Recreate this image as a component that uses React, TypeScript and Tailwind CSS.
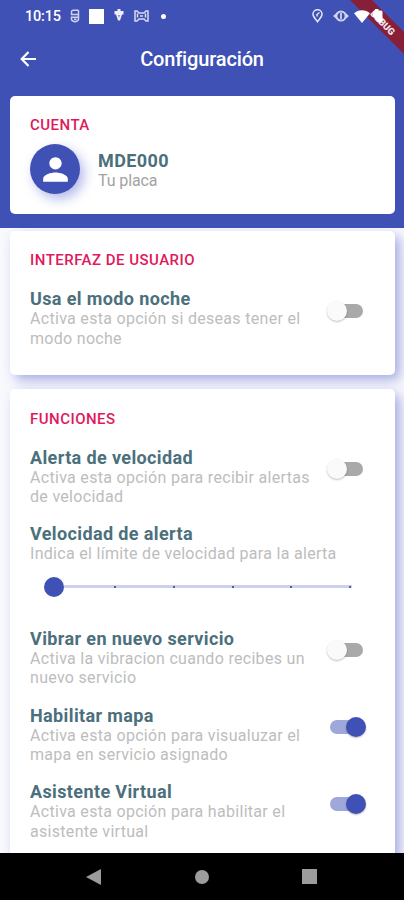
import React, { useState } from "react";
import { MdPerson } from "react-icons/md";

function StatusBar() {
  return (
    <div className="h-8 flex items-center justify-between pl-[25px] pr-[21px] text-white">
      <div className="flex items-center">
        <span className="w-[45px] pt-px text-[14.5px] leading-[31px] font-medium tracking-[-0.2px]">10:15</span>
        <svg className="opacity-75" width="10" height="14" viewBox="0 0 10 14" fill="none" stroke="currentColor" strokeWidth="1.5">
          <path d="M8.5 1.2H3Q1.5 1.2 1.5 3V5.5H8.5M8.5 1.2V10.2Q8.5 12 5 12.7Q1.5 12 1.5 10.2V8.2H8.5M4 10.3h2.5" />
        </svg>
        <span className="ml-[9px] w-[15px] h-[15px] bg-white" />
        <svg className="ml-[10px] -mt-[2px]" width="10" height="13" viewBox="0 0 10 13" fill="currentColor">
          <path d="M3.5 0h3v2H9.5v3.5H8L6 11.5H4L2 5.5H.5V2h3z" opacity=".9" />
          <path d="M3.8 6h2.4L5 9z" fill="#8c97d8" />
        </svg>
        <svg className="ml-[10px] opacity-80" width="15" height="12" viewBox="0 0 15 12" fill="none" stroke="currentColor" strokeWidth="1.5">
          <path d="M1 11V1h2l2 2h5l2-2h2v10h-2l-2-2H5l-2 2z" />
          <path d="M3.5 3.5v4M11.5 3.5v4M6 6h3" />
        </svg>
        <span className="ml-[12px] w-[5px] h-[5px] rounded-full bg-white" />
      </div>
      <div className="relative z-20 flex items-center">
        <svg width="11" height="14" viewBox="0 0 11 14" fill="none" stroke="currentColor" strokeWidth="1.5" opacity=".85">
          <path d="M5.5 12.7C3.3 9.8 1 7.8 1 5.2a4.5 4.5 0 0 1 9 0C10 7.8 7.7 9.8 5.5 12.7z" />
          <path d="M7.5 3.5L5 5.5v2" />
        </svg>
        <svg className="ml-[10px] opacity-75" width="16" height="12" viewBox="0 0 16 12" fill="currentColor">
          <path d="M0 6l4-3.5v7zM16 6l-4-3.5v7z" />
          <path d="M8 1.4a4.6 4.6 0 1 0 0 9.2 4.6 4.6 0 0 0 0-9.2z" fill="none" stroke="currentColor" strokeWidth="2" />
          <path d="M7.1 3h1.8v6H7.1z" />
        </svg>
        <svg className="ml-[5px]" width="16" height="13" viewBox="0 0 16 13" fill="currentColor">
          <path d="M0 3.2C4.5-.8 11.5-.8 16 3.2L8 13z" />
        </svg>
        <svg width="13" height="15" viewBox="0 0 13 15" fill="currentColor">
          <path d="M3.5 2.5L5 1.5V0h3.5v1.5H11q1.5 0 1.5 1.5v8q0 3-2.5 3L8 13 4.5 9 2.5 8z" />
        </svg>
      </div>
    </div>
  );
}

function DebugBanner() {
  return (
    <svg className="absolute top-0 right-0 z-10" width="60" height="60" viewBox="0 0 60 60">
      <path d="M6 0H28L60 32V54z" fill="#871f39" />
      <text
        x="38.5"
        y="26"
        transform="rotate(45 38.5 23)"
        textAnchor="middle"
        fontFamily="Roboto, sans-serif"
        fontWeight="900"
        fontSize="9.5"
        fill="#f3e6ea"
      >
        DEBUG
      </text>
    </svg>
  );
}

function Switch({ checked, onChange }: { checked: boolean; onChange: () => void }) {
  return (
    <button
      role="switch"
      aria-checked={checked}
      onClick={onChange}
      className="mt-[12.5px] w-10 h-5 shrink-0 flex items-center justify-center cursor-pointer"
    >
      <span className={`w-[33px] h-[14px] rounded-full flex items-center ${checked ? "bg-[#9fa8da] justify-end" : "bg-[#a9a9a9] justify-start"}`}>
        <span
          className={`w-5 h-5 shrink-0 rounded-full shadow-[0_1px_2px_rgba(0,0,0,0.25)] ${checked ? "bg-[#3f51b5] -mr-[3px]" : "bg-[#fafafa] -ml-[3px]"}`}
        />
      </span>
    </button>
  );
}

function Card({ title, className, children }: { title: string; className: string; children: React.ReactNode }) {
  return (
    <section className={`ml-[10px] mr-[9px] px-5 bg-white rounded-[5px] ${className}`}>
      <h2 className="text-[15px] leading-[18px] font-medium tracking-[0.48px] text-[#e0195c]">{title}</h2>
      {children}
    </section>
  );
}

function OptionText({ title, text }: { title: string; text: string }) {
  return (
    <div className="flex-1 pr-2">
      <h3 className="text-[18px] leading-[21px] font-bold tracking-[0.38px] text-[#4b707c]">{title}</h3>
      <p className="text-[16px] leading-[19.5px] tracking-[0.3px] text-[#bdbdbd]">{text}</p>
    </div>
  );
}

function Option({ title, text, initial = false }: { title: string; text: string; initial?: boolean }) {
  const [checked, setChecked] = useState(initial);

  return (
    <div className="flex items-start mb-[16.75px] pr-[9px]">
      <OptionText title={title} text={text} />
      <Switch checked={checked} onChange={() => setChecked(!checked)} />
    </div>
  );
}

export function App() {
  return (
    <div className="relative w-[404px] h-[900px] overflow-hidden flex flex-col bg-[#f8f9fd] font-['Roboto',sans-serif]">
      <DebugBanner />
      <header className="h-[228px] shrink-0 bg-[#3f51b5]">
        <StatusBar />
        <div className="h-[54px] grid grid-cols-[56px_1fr_56px] items-center text-white">
          <svg className="ml-5" width="17" height="16" viewBox="0 0 17 16" fill="none" stroke="currentColor" strokeWidth="2.2">
            <path d="M16 8H2M8.5 1L1.7 8l6.8 7" />
          </svg>
          <h1 className="text-center text-[20px] font-medium tracking-[-0.15px]">Configuración</h1>
        </div>
        <Card title="CUENTA" className="mt-[10px] pt-5 h-[118px]">
          <div className="flex items-center mt-[10px]">
            <div className="w-[50px] h-[50px] rounded-full bg-[#3f51b5] text-white flex items-center justify-center shadow-[4px_5px_12px_rgba(63,81,200,0.4)]">
              <MdPerson size={37} />
            </div>
            <div className="ml-[18px] pt-px">
              <h3 className="text-[18px] leading-[21px] font-bold tracking-[0.4px] text-[#4b707c]">MDE000</h3>
              <p className="text-[16px] leading-[19px] tracking-[-0.1px] text-[#a3a3a3]">Tu placa</p>
            </div>
          </div>
        </Card>
      </header>

      <main className="flex-1 min-h-0 overflow-hidden pt-[3px]">
        <Card title="INTERFAZ DE USUARIO" className="pt-5 h-[144px] shadow-[5px_5px_12px_rgba(63,70,190,0.42)]">
          <div className="mt-[19px]">
            <Option title="Usa el modo noche" text="Activa esta opción si deseas tener el modo noche" />
          </div>
        </Card>
        <Card title="FUNCIONES" className="mt-[14px] pt-[20.5px] h-[520px] shadow-[5px_5px_12px_rgba(63,70,190,0.42)]">
          <div className="mt-[19px]">
            <Option title="Alerta de velocidad" text="Activa esta opción para recibir alertas de velocidad" />
            <OptionText title="Velocidad de alerta" text="Indica el límite de velocidad para la alerta" />
            <div className="h-5 mt-[13px] mb-[31px] ml-[14px] mr-[23px] flex items-center">
              <span className="w-5 h-5 rounded-full bg-[#3f51b5]" />
              <span className="flex-1 h-[3px] pl-[50px] pr-px bg-[#cdd0ef] flex items-center justify-between">
                <i className="w-[2px] h-[2px] bg-[#5a5aac]" />
                <i className="w-[2px] h-[2px] bg-[#5a5aac]" />
                <i className="w-[2px] h-[2px] bg-[#5a5aac]" />
                <i className="w-[2px] h-[2px] bg-[#5a5aac]" />
                <i className="w-[2px] h-[2px] bg-[#5a5aac]" />
              </span>
            </div>
            <Option title="Vibrar en nuevo servicio" text="Activa la vibracion cuando recibes un nuevo servicio" />
            <Option title="Habilitar mapa" text="Activa esta opción para visualuzar el mapa en servicio asignado" initial />
            <Option title="Asistente Virtual" text="Activa esta opción para habilitar el asistente virtual" initial />
          </div>
        </Card>
      </main>

      <nav className="h-[47px] shrink-0 bg-black flex items-center justify-between pl-[86px] pr-[87px] text-[#9c9c9c]">
        <svg width="15" height="16" viewBox="0 0 15 16" fill="currentColor">
          <path d="M15 0v16L0 8z" />
        </svg>
        <span className="w-[14px] h-[14px] rounded-full bg-current" />
        <span className="w-[15px] h-[15px] bg-current" />
      </nav>
    </div>
  );
}

export default App;
